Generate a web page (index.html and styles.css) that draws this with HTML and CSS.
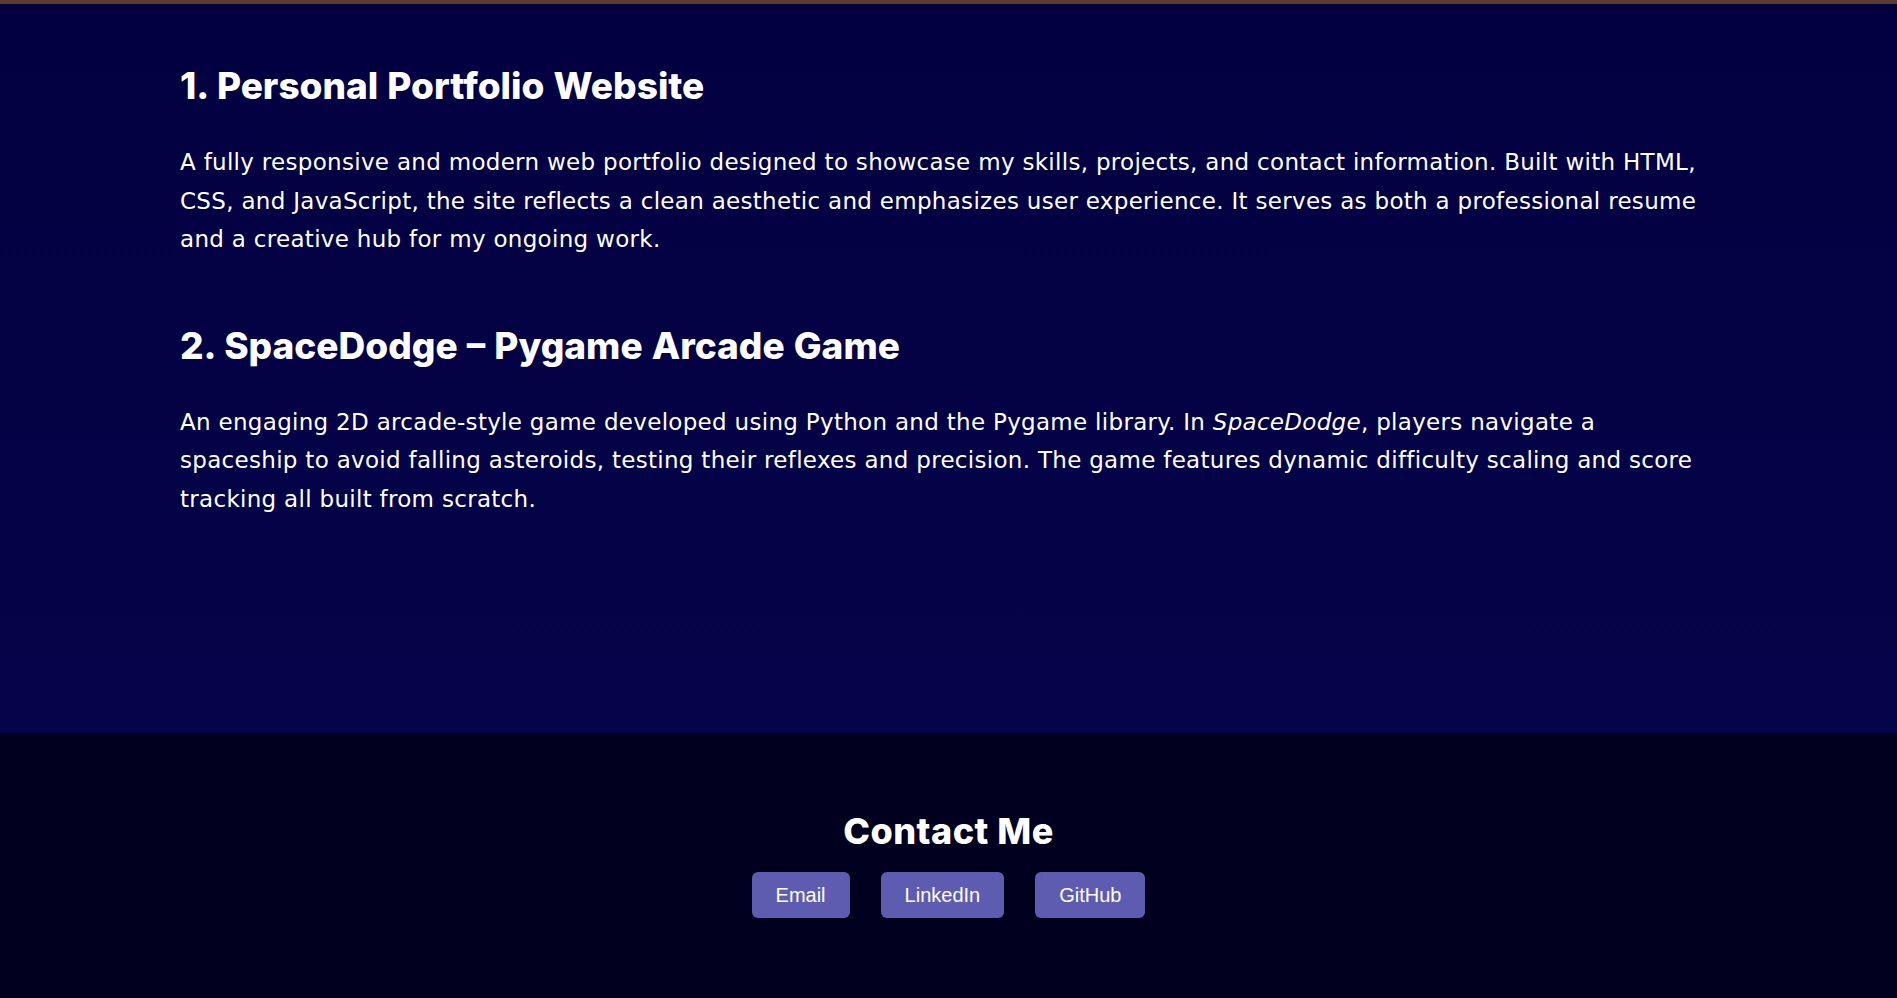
FILE: index.html
```html
<!DOCTYPE html>
<html lang="en">
<head>
<meta charset="utf-8">
<title>Projects</title>
<link rel="stylesheet" href="styles.css">
</head>
<body>
<div class="topbar"></div>
<main class="projects">
  <article class="project">
    <h2 class="project-title">1. Personal Portfolio Website</h2>
    <p class="project-text">A fully responsive and modern web portfolio designed to showcase my skills, projects, and contact information. Built with HTML, CSS, and JavaScript, the site reflects a clean aesthetic and emphasizes user experience. It serves as both a professional resume and a creative hub for my ongoing work.</p>
  </article>
  <article class="project">
    <h2 class="project-title">2. SpaceDodge – Pygame Arcade Game</h2>
    <p class="project-text">An engaging 2D arcade-style game developed using Python and the Pygame library. In <em class="game-name">SpaceDodge</em>, players navigate a spaceship to avoid falling asteroids, testing their reflexes and precision. The game features dynamic difficulty scaling and score tracking all built from scratch.</p>
  </article>
</main>
<footer class="contact">
  <h2 class="contact-title">Contact Me</h2>
  <div class="contact-links">
    <a class="btn" href="#">Email</a>
    <a class="btn" href="#">LinkedIn</a>
    <a class="btn" href="#">GitHub</a>
  </div>
</footer>
</body>
</html>
```
FILE: styles.css
```css
* { box-sizing: border-box; }
html, body { margin: 0; padding: 0; }
body {
  background: #01001e;
  color: #fff;
  font-family: "Inter", "DejaVu Sans", sans-serif;
}
.topbar {
  height: 4px;
  background: #5c3b35;
}
.projects {
  height: 729px;
  padding: 60px 180px 0 180px;
  background: linear-gradient(180deg, #030040 0%, #05044a 100%);
}
.project { margin-bottom: 65px; }
.project-title {
  margin: 0;
  font-family: "Inter", sans-serif;
  font-size: 37px;
  line-height: 43px;
  font-weight: 800;
  word-spacing: 1px;
}
.project-text {
  margin: 36px 0 0 0;
  font-family: "DejaVu Sans", sans-serif;
  font-size: 23px;
  line-height: 38.5px;
  font-weight: 400;
  letter-spacing: 0.3px;
}
.game-name {
  font-style: italic;
}
.contact {
  height: 265px;
  padding-top: 78px;
  background: #01001e;
  text-align: center;
}
.contact-title {
  margin: 0;
  font-family: "Inter", sans-serif;
  font-size: 36px;
  line-height: 41px;
  font-weight: 800;
  letter-spacing: 0.5px;
}
.contact-links {
  margin-top: 20px;
  display: flex;
  justify-content: center;
  gap: 31px;
}
.btn {
  display: block;
  padding: 12px 24px 11px;
  border-radius: 6px;
  background: #5e5cb0;
  color: #fff;
  text-decoration: none;
  font-family: "Liberation Sans", Arial, sans-serif;
  font-size: 20px;
  line-height: 23px;
}
```
